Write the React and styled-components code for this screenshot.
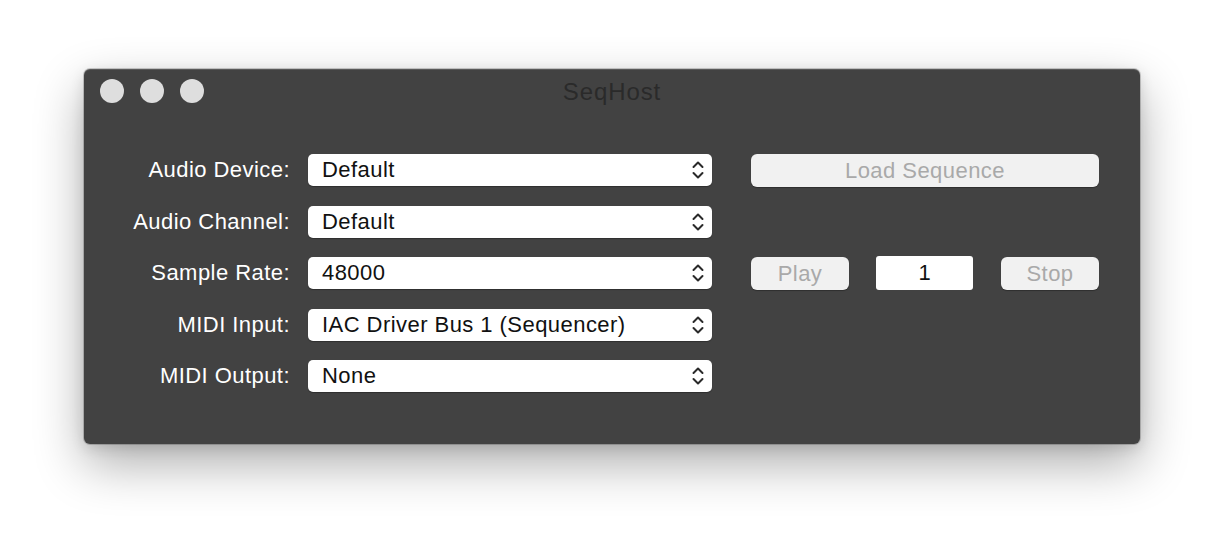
import styled, { createGlobalStyle } from 'styled-components';

const GlobalStyle = createGlobalStyle`
    html, body {
        margin: 0;
        padding: 0;
        background: #ffffff;
    }
    body {
        font-family: "Liberation Sans", Arial, sans-serif;
    }
`

const Page = styled.div`
    width: 1224px;
    height: 544px;
    overflow: hidden;
    padding-top: 69px;
    box-sizing: border-box;
`

const Window = styled.div`
    width: 1056px;
    height: 375px;
    margin: 0 auto;
    background: #424242;
    border-radius: 6px;
    box-shadow:
        0 0 0 1px rgba(0, 0, 0, 0.18),
        inset 0 1px 0 rgba(255, 255, 255, 0.12),
        0 20px 50px rgba(0, 0, 0, 0.32),
        0 4px 14px rgba(0, 0, 0, 0.12);
    display: flex;
    flex-direction: column;
`

const TitleBar = styled.div`
    height: 44px;
    display: grid;
    grid-template-columns: 1fr auto 1fr;
    align-items: center;
    padding: 0 16px;
`

const Lights = styled.div`
    display: flex;
    gap: 16px;
`

const Light = styled.span`
    width: 24px;
    height: 24px;
    border-radius: 50%;
    background: #dedede;
`

const Title = styled.div`
    font-size: 24px;
    color: #2a2a2a;
    letter-spacing: 0.9px;
    padding-top: 2px;
`

const Content = styled.div`
    display: grid;
    grid-template-columns: 204px 404px 39px 98px 1fr 96px 1fr 98px;
    grid-auto-rows: 32px;
    row-gap: 19.5px;
    padding: 41px 41px 0 20px;
`

const Label = styled.div`
    grid-column: 1;
    text-align: right;
    padding-right: 18px;
    color: #ffffff;
    font-size: 22px;
    line-height: 32px;
    letter-spacing: 0.45px;
    white-space: nowrap;
`

const Select = styled.div`
    grid-column: 2;
    background: #ffffff;
    border-radius: 5px;
    display: flex;
    align-items: center;
    justify-content: space-between;
    padding: 0 6px 0 14px;
    color: #111111;
    font-size: 22px;
    letter-spacing: 0.45px;
    box-shadow: 0 1px 1px rgba(0, 0, 0, 0.3);
`

const Button = styled.div`
    grid-column: ${p => p.$col};
    background: #f1f1f1;
    border-radius: 6px;
    color: #a9a9a9;
    font-size: 22px;
    letter-spacing: 0.45px;
    display: flex;
    align-items: center;
    justify-content: center;
    height: 33px;
    box-shadow: 0 1px 1px rgba(0, 0, 0, 0.3);
`

const NumberField = styled.div`
    grid-column: 6;
    background: #ffffff;
    border-radius: 3px;
    color: #111111;
    font-size: 22px;
    display: flex;
    align-items: center;
    justify-content: center;
    margin-left: -1px;
    margin-top: -1px;
    height: 34px;
`

const Chevrons = () => (
    <svg width="16" height="22" viewBox="0 0 16 22" fill="none" stroke="#2a2a2a" strokeWidth="2" strokeLinecap="round" strokeLinejoin="round">
        <path d="M3.5 8 L8 3.5 L12.5 8" />
        <path d="M3.5 14 L8 18.5 L12.5 14" />
    </svg>
)

const rows = [
    ['Audio Device:', 'Default'],
    ['Audio Channel:', 'Default'],
    ['Sample Rate:', '48000'],
    ['MIDI Input:', 'IAC Driver Bus 1 (Sequencer)'],
    ['MIDI Output:', 'None'],
]

const App = () => {
    return (
        <Page>
            <GlobalStyle />
            <Window>
                <TitleBar>
                    <Lights>
                        <Light />
                        <Light />
                        <Light />
                    </Lights>
                    <Title>SeqHost</Title>
                    <div />
                </TitleBar>
                <Content>
                    {rows.map(([label, value], i) => (
                        <div key={label} style={{ display: 'contents' }}>
                            <Label style={{ gridRow: i + 1 }}>{label}</Label>
                            <Select style={{ gridRow: i + 1 }}>
                                <span>{value}</span>
                                <Chevrons />
                            </Select>
                        </div>
                    ))}
                    <Button $col="4 / 9" style={{ gridRow: 1 }}>Load Sequence</Button>
                    <Button $col="4" style={{ gridRow: 3 }}>Play</Button>
                    <NumberField style={{ gridRow: 3 }}>1</NumberField>
                    <Button $col="8" style={{ gridRow: 3 }}>Stop</Button>
                </Content>
            </Window>
        </Page>
    )
}

export default App;
